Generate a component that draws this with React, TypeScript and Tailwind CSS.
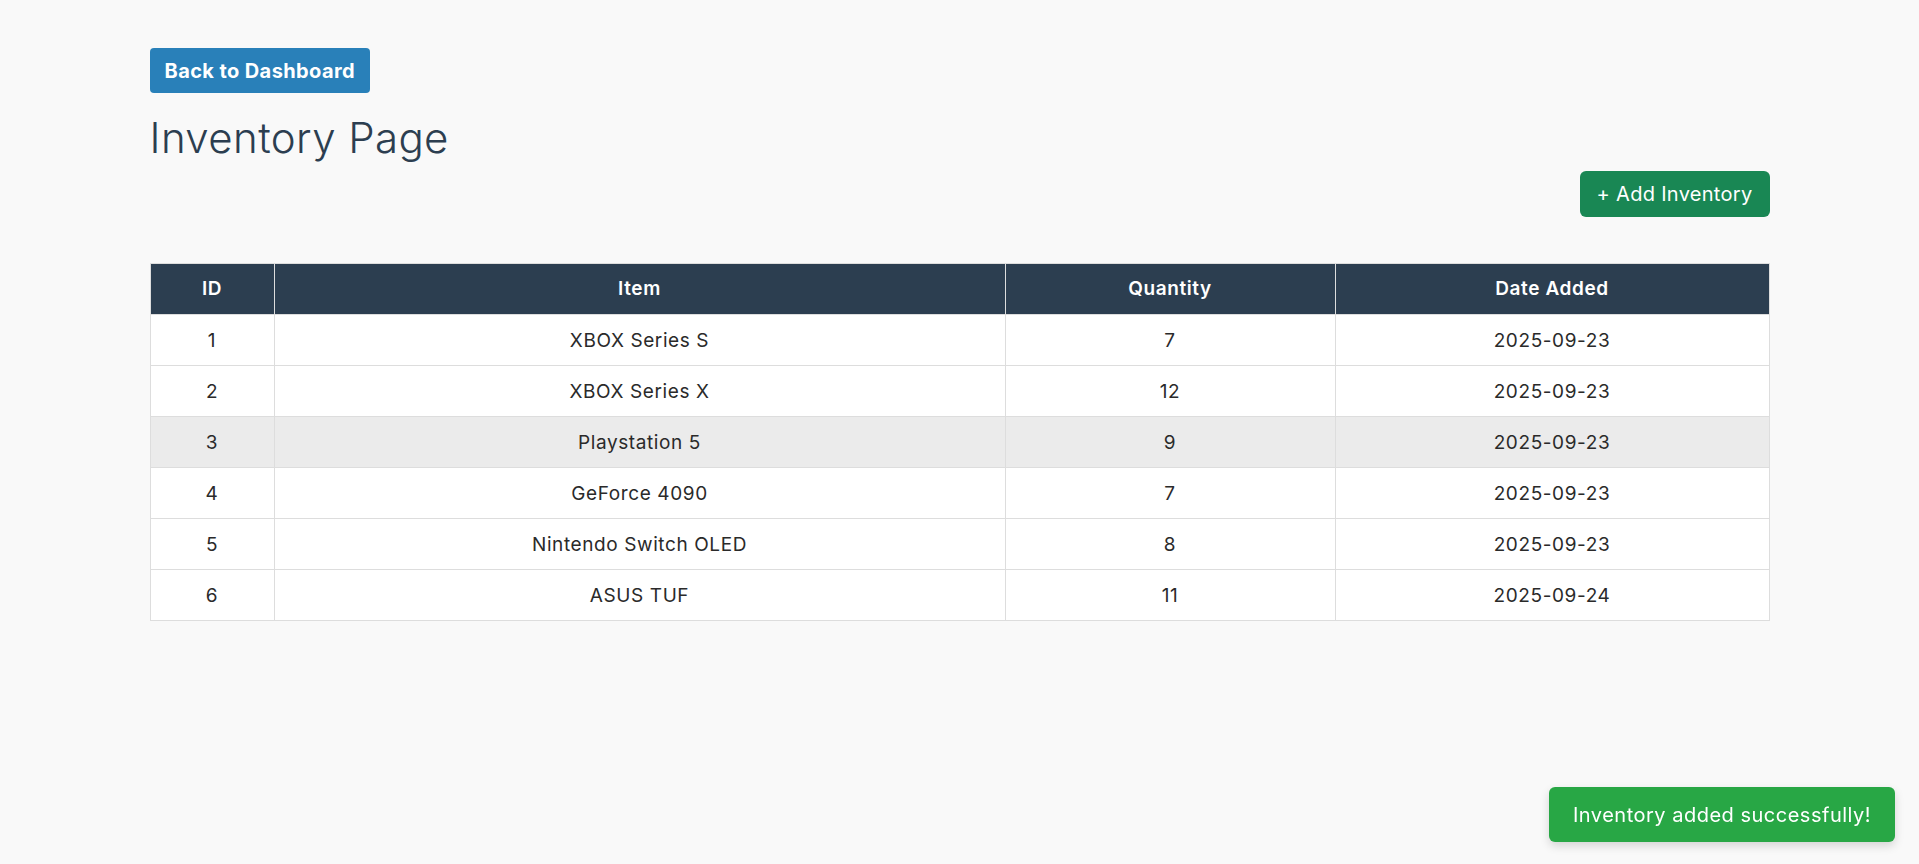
import React from "react";

const rows = [
  { id: 1, item: "XBOX Series S", qty: 7, date: "2025-09-23" },
  { id: 2, item: "XBOX Series X", qty: 12, date: "2025-09-23" },
  { id: 3, item: "Playstation 5", qty: 9, date: "2025-09-23" },
  { id: 4, item: "GeForce 4090", qty: 7, date: "2025-09-23" },
  { id: 5, item: "Nintendo Switch OLED", qty: 8, date: "2025-09-23" },
  { id: 6, item: "ASUS TUF", qty: 11, date: "2025-09-24" },
];

export default function App() {
  return (
    <div className="min-h-screen bg-[#f9f9f9] font-['Inter','Open_Sans',sans-serif] text-[#2a2a2a]">
      <div className="max-w-[1620px] mx-auto pt-[48px]">
        <button className="h-[45px] px-[15px] rounded-[4px] bg-[#2980b9] text-white text-[20px] font-bold tracking-[0.4px]">
          Back to Dashboard
        </button>
        <h1 className="mt-[21px] text-[42px] leading-[48px] font-light tracking-[0.4px] text-[#2c3e50]">
          Inventory Page
        </h1>
        <div className="flex justify-end mt-[9px]">
          <button className="h-[46px] px-[17px] rounded-[6px] bg-[#198754] text-white text-[20px] tracking-[0.3px]">
            + Add Inventory
          </button>
        </div>
        <table className="w-full mt-[46px] border-collapse bg-white text-[19px] tracking-[0.6px]">
          <thead>
            <tr className="bg-[#2c3e50] text-white">
              <th className="w-[124px] h-[51px] border border-[#ddd] font-semibold">ID</th>
              <th className="w-[731px] border border-[#ddd] font-semibold">Item</th>
              <th className="w-[330px] border border-[#ddd] font-semibold">Quantity</th>
              <th className="border border-[#ddd] font-semibold">Date Added</th>
            </tr>
          </thead>
          <tbody>
            {rows.map((r) => (
              <tr key={r.id} className={r.id === 3 ? "bg-[#ebebeb]" : "bg-white"}>
                <td className="h-[51px] pt-[2px] border border-[#ddd] text-center">{r.id}</td>
                <td className="pt-[2px] border border-[#ddd] text-center">{r.item}</td>
                <td className="pt-[2px] border border-[#ddd] text-center">{r.qty}</td>
                <td className="pt-[2px] border border-[#ddd] text-center">{r.date}</td>
              </tr>
            ))}
          </tbody>
        </table>
      </div>
      <div className="fixed right-[24px] bottom-[22px] h-[55px] px-[24px] flex items-center rounded-[6px] bg-[#28a745] text-white text-[20px] tracking-[0.5px] shadow-[0_4px_10px_rgba(0,0,0,0.15)]">
        Inventory added successfully!
      </div>
    </div>
  );
}
